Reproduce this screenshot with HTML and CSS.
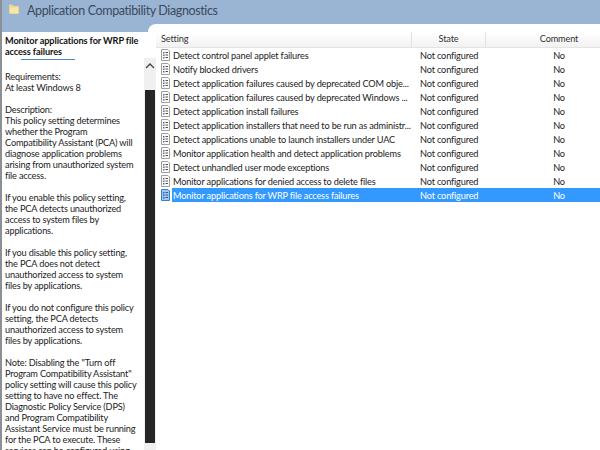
FILE: index.html
```html
<!DOCTYPE html>
<html lang="en">
<head>
<meta charset="utf-8">
<title>Application Compatibility Diagnostics</title>
<link rel="stylesheet" href="styles.css">
</head>
<body>
<svg width="0" height="0" class="defs">
  <symbol id="policy" viewBox="0 0 11 12">
    <path d="M1.500.5h6.500l1.500 1.500v9.500h-8z" fill="#fbfbfb" stroke="#a0a0a0"/>
    <path d="M3 3h1.500v1.500H3zM3 5.500h1.500V7H3zM3 8h1.500v1.500H3z" fill="#5f7286"/>
    <path d="M5.500 3.500h2.500M5.500 6h2.500M5.500 8.500h2.500" stroke="#555" fill="none"/>
  </symbol>
  <symbol id="policy-sel" viewBox="0 0 11 12">
    <path d="M1.500.5h6.500l1.500 1.500v9.500h-8z" fill="#9cc9f4" stroke="#3f7fc0"/>
    <path d="M3 3h1.500v1.500H3zM3 5.500h1.500V7H3zM3 8h1.500v1.500H3z" fill="#2c6fb5"/>
    <path d="M5.500 3.500h2.500M5.500 6h2.500M5.500 8.500h2.500" stroke="#2c5f98" fill="none"/>
  </symbol>
</svg>
<div class="window">
  <header class="title">
    <svg class="folder" width="10" height="10" viewBox="0 0 10 10">
      <path d="M0 1.500C0 1 .3.500 1 .500h2.500L4.500 2H9c.6 0 1 .4 1 1v6c0 .5-.4 1-1 1H1c-.6 0-1-.5-1-1z" fill="#eed68c"/>
      <path d="M1 3.500h8V9H1z" fill="#f7e6ac"/>
    </svg>
    <span>Application Compatibility Diagnostics</span>
  </header>
  <main class="panes">
    <section class="detail">
      <div class="detail-text">
        <h2>Monitor applications for WRP file<br>access failures</h2>
        <div class="rule"></div>
        <p>Requirements:<br>At least Windows 8</p>
        <p>Description:<br>This policy setting determines<br>whether the Program<br>Compatibility Assistant (PCA) will<br>diagnose application problems<br>arising from unauthorized system<br>file access.</p>
        <p>If you enable this policy setting,<br>the PCA detects unauthorized<br>access to system files by<br>applications.</p>
        <p>If you disable this policy setting,<br>the PCA does not detect<br>unauthorized access to system<br>files by applications.</p>
        <p>If you do not configure this policy<br>setting, the PCA detects<br>unauthorized access to system<br>files by applications.</p>
        <p>Note: Disabling the "Turn off<br>Program Compatibility Assistant"<br>policy setting will cause this policy<br>setting to have no effect. The<br>Diagnostic Policy Service (DPS)<br>and Program Compatibility<br>Assistant Service must be running<br>for the PCA to execute. These<br>services can be configured using</p>
      </div>
      <div class="scrollbar">
        <svg class="arrow" width="10" height="6" viewBox="0 0 10 6"><path d="M1 5l4-4 4 4" fill="none" stroke="#444" stroke-width="1.300"/></svg>
        <div class="thumb"></div>
      </div>
    </section>
    <section class="list">
      <div class="head">
        <div class="col-setting">Setting</div>
        <div class="col-state">State</div>
        <div class="col-comment">Comment</div>
      </div>
      <div class="row"><svg class="ico"><use href="#policy"/></svg><div class="name">Detect control panel applet failures</div><div class="state">Not configured</div><div class="comment">No</div></div>
      <div class="row"><svg class="ico"><use href="#policy"/></svg><div class="name">Notify blocked drivers</div><div class="state">Not configured</div><div class="comment">No</div></div>
      <div class="row"><svg class="ico"><use href="#policy"/></svg><div class="name">Detect application failures caused by deprecated COM obje...</div><div class="state">Not configured</div><div class="comment">No</div></div>
      <div class="row"><svg class="ico"><use href="#policy"/></svg><div class="name">Detect application failures caused by deprecated Windows ...</div><div class="state">Not configured</div><div class="comment">No</div></div>
      <div class="row"><svg class="ico"><use href="#policy"/></svg><div class="name">Detect application install failures</div><div class="state">Not configured</div><div class="comment">No</div></div>
      <div class="row"><svg class="ico"><use href="#policy"/></svg><div class="name">Detect application installers that need to be run as administr...</div><div class="state">Not configured</div><div class="comment">No</div></div>
      <div class="row"><svg class="ico"><use href="#policy"/></svg><div class="name">Detect applications unable to launch installers under UAC</div><div class="state">Not configured</div><div class="comment">No</div></div>
      <div class="row"><svg class="ico"><use href="#policy"/></svg><div class="name">Monitor application health and detect application problems</div><div class="state">Not configured</div><div class="comment">No</div></div>
      <div class="row"><svg class="ico"><use href="#policy"/></svg><div class="name">Detect unhandled user mode exceptions</div><div class="state">Not configured</div><div class="comment">No</div></div>
      <div class="row"><svg class="ico"><use href="#policy"/></svg><div class="name">Monitor applications for denied access to delete files</div><div class="state">Not configured</div><div class="comment">No</div></div>
      <div class="row selected"><svg class="ico"><use href="#policy-sel"/></svg><div class="name">Monitor applications for WRP file access failures</div><div class="state">Not configured</div><div class="comment">No</div></div>
    </section>
  </main>
</div>
</body>
</html>
```
FILE: styles.css
```css
html, body {
  margin: 0;
  padding: 0;
  width: 600px;
  height: 450px;
  overflow: hidden;
}
body {
  font-family: Lato, Roboto, sans-serif;
  font-size: 9.2px;
  letter-spacing: -0.17px;
  line-height: 11px;
  color: #1c1c1c;
  background: #9ab4d3;
}
.defs { display: block; height: 0; }
.window {
  display: flex;
  flex-direction: column;
  height: 450px;
  overflow: hidden;
  border-left: 2px solid #8b8f96;
  box-sizing: border-box;
}
.title {
  height: 24px;
  flex: none;
  display: flex;
  align-items: flex-start;
  gap: 8px;
  padding: 1px 0 0 7px;
  box-sizing: border-box;
  font-size: 12.5px;
  letter-spacing: -0.38px;
  line-height: 20px;
  color: #3b4a5c;
}
.folder { margin-top: 3px; }
.panes {
  flex: 1;
  display: flex;
  min-height: 0;
}
.detail {
  width: 154px;
  flex: none;
  display: flex;
  margin-top: 8px;
  background: #fff;
  position: relative;
}
.detail::before {
  content: "";
  position: absolute;
  left: 146px;
  top: -8px;
  width: 8px;
  height: 8px;
  background: #fff;
  border-top-left-radius: 8px;
}
.detail-text {
  flex: 1;
  min-width: 0;
  padding: 3px 0 0 3px;
  white-space: nowrap;
  overflow: hidden;
}
.detail-text h2 {
  margin: 0;
  font-size: 9.2px;
  letter-spacing: -0.1px;
  line-height: 11px;
  font-weight: 700;
  color: #111;
}
.rule {
  width: 54px;
  height: 1px;
  margin: 2px 0 0 16px;
  background: #4d86c9;
}
.detail-text p { margin: 0 0 11px; }
.rule + p { margin-top: 11px; }
.scrollbar {
  width: 12px;
  flex: none;
  margin-top: 26px;
  background: #f0f0f0;
  display: flex;
  flex-direction: column;
  align-items: center;
  padding-top: 5px;
  box-sizing: border-box;
}
.arrow { flex: none; }
.thumb {
  width: 10px;
  height: 353px;
  margin-top: 21px;
  background: #262626;
  flex: none;
}
.list {
  flex: 1;
  min-width: 0;
  background: #fff;
  padding-top: 8px;
  overflow: hidden;
}
.head {
  display: flex;
  height: 15px;
  line-height: 14px;
  color: #333;
  background: linear-gradient(#fff, #f2f2f2);
  border-bottom: 1px solid #e4e4e4;
}
.col-setting {
  width: 256px;
  padding-left: 5px;
  flex: none;
  box-sizing: border-box;
  border-right: 1px solid #e2e2e2;
}
.col-state {
  width: 74px;
  flex: none;
  text-align: center;
  box-sizing: border-box;
  border-right: 1px solid #e2e2e2;
}
.col-comment {
  width: 146px;
  flex: none;
  text-align: center;
}
.row {
  display: flex;
  height: 14px;
  line-height: 16px;
  align-items: center;
}
.ico {
  width: 11px;
  height: 12px;
  flex: none;
  margin: 0 1px 0 4px;
}
.row .name,
.row .state,
.row .comment {
  height: 14px;
  flex: none;
  white-space: nowrap;
  box-sizing: border-box;
}
.row .name { width: 248px; padding-left: 1px; }
.row .state { width: 66px; }
.row .comment { width: 146px; text-align: center; }
.selected .name,
.selected .state,
.selected .comment {
  background: #3399ff;
  color: #fff;
}
```
